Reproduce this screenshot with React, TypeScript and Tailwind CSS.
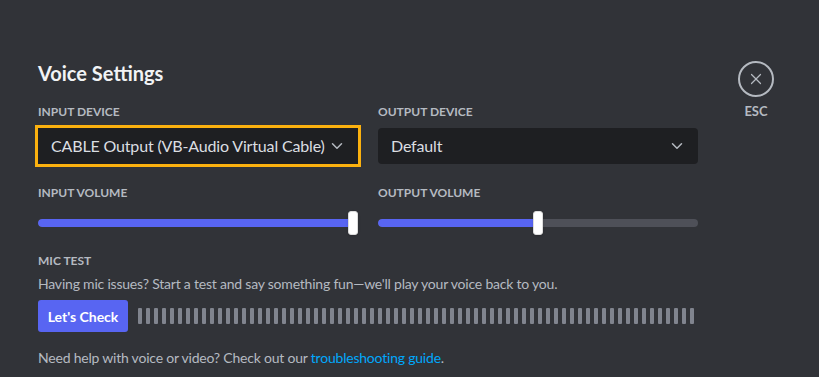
import { ChevronDown, X } from 'lucide-react'

function Select({ value, focused }: { value: string; focused?: boolean }) {
  return (
    <div
      className={`flex items-center justify-between h-9 w-full bg-[#1e1f22] pl-[13px] pr-[12px] text-[16px] text-[#dbdee1] whitespace-nowrap tracking-[-0.01em] ${
        focused ? 'outline-3 outline-solid outline-[#fbb10f]' : 'rounded'
      }`}
    >
      <span>{value}</span>
      <ChevronDown className="h-[18px] w-[18px] text-[#b5bac1]" strokeWidth={2} />
    </div>
  )
}

function Slider({ pct }: { pct: number }) {
  return (
    <div className="relative h-6 w-full flex items-center">
      <div className="h-2 w-full rounded-full bg-[#4e5058] overflow-hidden">
        <div className="h-full rounded-full bg-[#5865f2]" style={{ width: `${pct}%` }} />
      </div>
      <div
        className="absolute top-0 h-6 w-[10px] rounded-[3px] bg-white shadow border border-[#dcdcdc]"
        style={{ left: `calc(${pct}% - 5px)` }}
      />
    </div>
  )
}

function Label({ children }: { children: string }) {
  return <div className="text-[12px] font-bold uppercase text-[#b5bac1] leading-4">{children}</div>
}

export default function App() {
  const bars = Array.from({ length: 70 })
  return (
    <div className="w-[819px] h-[377px] bg-[#313338] overflow-hidden font-['Lato','Noto_Sans',sans-serif] text-[#b5bac1]">
      <div className="flex pt-[60px] pl-[38px]">
        <div className="w-[660px]">
          <h1 className="text-[20px] font-bold text-[#f2f3f5] leading-6 mt-[1px]">Voice Settings</h1>

          <div className="grid grid-cols-2 gap-x-5 mt-[19px]">
            <div>
              <Label>Input Device</Label>
              <div className="mt-[8px]">
                <Select value="CABLE Output (VB-Audio Virtual Cable)" focused />
              </div>
            </div>
            <div>
              <Label>Output Device</Label>
              <div className="mt-[8px]">
                <Select value="Default" />
              </div>
            </div>

            <div className="mt-[21px]">
              <Label>Input Volume</Label>
              <div className="mt-[10px]">
                <Slider pct={98.5} />
              </div>
            </div>
            <div className="mt-[21px]">
              <Label>Output Volume</Label>
              <div className="mt-[10px]">
                <Slider pct={50} />
              </div>
            </div>
          </div>

          <div className="mt-[18px]">
            <Label>Mic Test</Label>
            <p className="mt-[6px] text-[14px] leading-[18px] tracking-[-0.015em]">
              Having mic issues? Start a test and say something fun—we'll play your voice back to you.
            </p>
            <div className="flex items-center mt-[7px]">
              <button className="h-8 w-[90px] rounded-[3px] bg-[#5865f2] text-[14px] font-bold text-white">Let's Check</button>
              <div className="flex items-center gap-1 ml-[10px]">
                {bars.map((_, i) => (
                  <div key={i} className="h-4 w-1 rounded-[1px] bg-[#80848e]" />
                ))}
              </div>
            </div>
            <p className="mt-[17px] text-[14px] leading-[18px] tracking-[-0.015em]">
              Need help with voice or video? Check out our{' '}
              <span className="text-[#00a8fc]">troubleshooting guide</span>.
            </p>
          </div>
        </div>

        <div className="ml-[40px] flex flex-col items-center">
          <div className="mt-px h-9 w-9 rounded-full border-2 border-[#b5bac1] flex items-center justify-center">
            <X className="h-[18px] w-[18px] text-[#b5bac1]" strokeWidth={1.6} />
          </div>
          <div className="mt-[6px] text-[13px] font-bold text-[#b5bac1] leading-4">ESC</div>
        </div>
      </div>
    </div>
  )
}
